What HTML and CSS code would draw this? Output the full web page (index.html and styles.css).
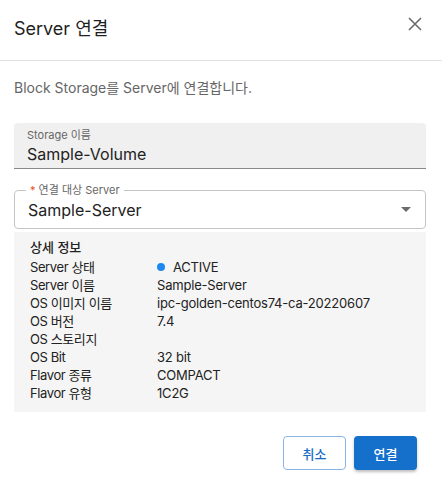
FILE: index.html
```html
<!DOCTYPE html>
<html lang="ko">
<head>
<meta charset="utf-8">
<link rel="stylesheet" href="styles.css">
</head>
<body>
<div class="dialog">
  <header class="dialog-header">
    <h1 class="dialog-title">Server 연결</h1>
    <button class="close-btn" aria-label="닫기">
      <svg width="14" height="14" viewBox="0 0 14 14"><path d="M1 1L13 13M13 1L1 13" stroke="#6b6b6b" stroke-width="1.6" fill="none"/></svg>
    </button>
  </header>
  <div class="dialog-body">
    <p class="desc">Block Storage를 Server에 연결합니다.</p>
    <div class="filled-field">
      <span class="filled-label">Storage 이름</span>
      <span class="filled-value">Sample-Volume</span>
    </div>
    <div class="select-field">
      <span class="legend"><span class="req">*</span> 연결 대상 Server</span>
      <span class="select-value">Sample-Server</span>
      <span class="arrow"></span>
    </div>
    <div class="details">
      <div class="details-title">상세 정보</div>
      <div class="row"><span class="k">Server 상태</span><span class="v"><span class="dot"></span>ACTIVE</span></div>
      <div class="row"><span class="k">Server 이름</span><span class="v">Sample-Server</span></div>
      <div class="row"><span class="k">OS 이미지 이름</span><span class="v">ipc-golden-centos74-ca-20220607</span></div>
      <div class="row"><span class="k">OS 버전</span><span class="v">7.4</span></div>
      <div class="row"><span class="k">OS 스토리지</span><span class="v"></span></div>
      <div class="row"><span class="k">OS Bit</span><span class="v">32 bit</span></div>
      <div class="row"><span class="k">Flavor 종류</span><span class="v">COMPACT</span></div>
      <div class="row"><span class="k">Flavor 유형</span><span class="v">1C2G</span></div>
    </div>
  </div>
  <footer class="dialog-actions">
    <button class="btn btn-outline">취소</button>
    <button class="btn btn-primary">연결</button>
  </footer>
</div>
</body>
</html>
```

FILE: styles.css
```css
* { box-sizing: border-box; }
html, body {
  margin: 0;
  padding: 0;
  background: #ffffff;
}
body {
  font-family: Inter, "Noto Sans CJK KR", sans-serif;
  color: #222;
}
.dialog {
  width: 442px;
  height: 494px;
  display: flex;
  flex-direction: column;
}
.dialog-header {
  height: 61px;
  border-bottom: 1px solid #e2e2e2;
  display: flex;
  justify-content: space-between;
  align-items: flex-start;
  padding: 0 20px 0 14px;
}
.dialog-title {
  margin: 19px 0 0;
  font-size: 18px;
  font-weight: 400;
  line-height: 20px;
  color: #1f1f1f;
}
.close-btn {
  margin-top: 17px;
  padding: 0;
  border: 0;
  background: none;
  width: 14px;
  height: 14px;
  display: flex;
}
.dialog-body {
  padding: 0 16px 0 14px;
}
.desc {
  margin: 18px 0 0;
  font-size: 14px;
  line-height: 18px;
  color: #666;
}
.filled-field {
  margin-top: 26px;
  height: 46px;
  background: #f0f0f0;
  border-bottom: 1px solid #8a8a8a;
  border-radius: 4px 4px 0 0;
  padding: 5px 13px 0;
  display: flex;
  flex-direction: column;
}
.filled-label {
  font-size: 11px;
  line-height: 14px;
  color: #666;
}
.filled-value {
  margin-top: 2px;
  font-size: 16px;
  line-height: 20px;
  color: #222;
}
.select-field {
  position: relative;
  margin-top: 21px;
  height: 39px;
  border: 1px solid #c4c4c4;
  border-radius: 4px;
  display: flex;
  align-items: center;
  padding: 0 14px 0 13px;
}
.legend {
  position: absolute;
  left: 11px;
  top: -8px;
  padding: 0 4px;
  background: #fff;
  font-size: 11px;
  line-height: 14px;
  color: #666;
}
.req {
  color: #e5532d;
}
.select-value {
  flex: 1;
  font-size: 16px;
  line-height: 20px;
  color: #222;
}
.arrow {
  width: 0;
  height: 0;
  border-left: 5px solid transparent;
  border-right: 5px solid transparent;
  border-top: 5px solid #6b6b6b;
}
.details {
  margin-top: 3px;
  background: #f5f5f5;
  padding: 6px 16px 10px;
}
.details-title {
  font-size: 13px;
  line-height: 18px;
  font-weight: 500;
  color: #222;
  margin-bottom: 2px;
}
.row {
  display: flex;
  font-size: 13px;
  line-height: 18px;
  color: #222;
}
.k {
  width: 127px;
  flex-shrink: 0;
  letter-spacing: -0.4px;
}
.v {
  display: flex;
  align-items: center;
  font-variant-numeric: proportional-nums;
  letter-spacing: -0.2px;
}
.dot {
  width: 8px;
  height: 8px;
  border-radius: 50%;
  background: #1e88f0;
  margin-right: 8px;
}
.dialog-actions {
  display: flex;
  justify-content: flex-end;
  gap: 8px;
  padding: 24px 25px 0;
}
.btn {
  width: 63px;
  height: 34px;
  border-radius: 4px;
  font-family: Inter, "Noto Sans CJK KR", sans-serif;
  font-size: 13px;
  font-weight: 500;
  cursor: pointer;
}
.btn-outline {
  background: #fff;
  border: 1px solid #8bb4e6;
  color: #1a6bc6;
}
.btn-primary {
  background: #1570cc;
  border: 0;
  color: #fff;
  box-shadow: 0 2px 3px rgba(0,0,0,0.25);
}
```
